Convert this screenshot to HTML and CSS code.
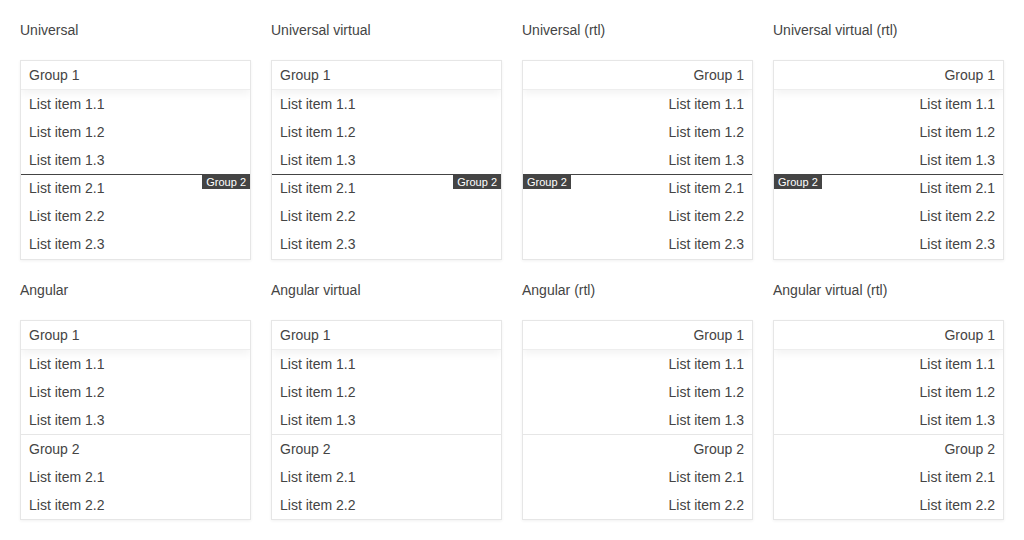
FILE: index.html
```html
<!DOCTYPE html>
<html lang="en">
  <head>
    <meta charset="UTF-8" />
    <meta name="viewport" content="width=device-width, initial-scale=1.0" />
    <title>Grouped lists</title>
    <link rel="stylesheet" href="styles.css">
  </head>
  <body>
    <div class="demo-grid">
      <!-- universal row -->
      <section class="demo">
        <h3 class="demo-title">Universal</h3>
        <div class="list">
          <div class="list-header">Group 1</div>
          <div class="list-item">List item 1.1</div>
          <div class="list-item">List item 1.2</div>
          <div class="list-item">List item 1.3</div>
          <div class="list-item group-start">List item 2.1<span class="group-badge">Group 2</span></div>
          <div class="list-item">List item 2.2</div>
          <div class="list-item">List item 2.3</div>
        </div>
      </section>

      <section class="demo">
        <h3 class="demo-title">Universal virtual</h3>
        <div class="list">
          <div class="list-header">Group 1</div>
          <div class="list-item">List item 1.1</div>
          <div class="list-item">List item 1.2</div>
          <div class="list-item">List item 1.3</div>
          <div class="list-item group-start">List item 2.1<span class="group-badge">Group 2</span></div>
          <div class="list-item">List item 2.2</div>
          <div class="list-item">List item 2.3</div>
        </div>
      </section>

      <section class="demo">
        <h3 class="demo-title">Universal (rtl)</h3>
        <div class="list" dir="rtl">
          <div class="list-header">Group 1</div>
          <div class="list-item">List item 1.1</div>
          <div class="list-item">List item 1.2</div>
          <div class="list-item">List item 1.3</div>
          <div class="list-item group-start">List item 2.1<span class="group-badge">Group 2</span></div>
          <div class="list-item">List item 2.2</div>
          <div class="list-item">List item 2.3</div>
        </div>
      </section>

      <section class="demo">
        <h3 class="demo-title">Universal virtual (rtl)</h3>
        <div class="list" dir="rtl">
          <div class="list-header">Group 1</div>
          <div class="list-item">List item 1.1</div>
          <div class="list-item">List item 1.2</div>
          <div class="list-item">List item 1.3</div>
          <div class="list-item group-start">List item 2.1<span class="group-badge">Group 2</span></div>
          <div class="list-item">List item 2.2</div>
          <div class="list-item">List item 2.3</div>
        </div>
      </section>

      <!-- angular row -->
      <section class="demo">
        <h3 class="demo-title">Angular</h3>
        <div class="list">
          <div class="list-header">Group 1</div>
          <div class="list-item">List item 1.1</div>
          <div class="list-item">List item 1.2</div>
          <div class="list-item">List item 1.3</div>
          <div class="list-item group-row">Group 2</div>
          <div class="list-item">List item 2.1</div>
          <div class="list-item">List item 2.2</div>
        </div>
      </section>

      <section class="demo">
        <h3 class="demo-title">Angular virtual</h3>
        <div class="list">
          <div class="list-header">Group 1</div>
          <div class="list-item">List item 1.1</div>
          <div class="list-item">List item 1.2</div>
          <div class="list-item">List item 1.3</div>
          <div class="list-item group-row">Group 2</div>
          <div class="list-item">List item 2.1</div>
          <div class="list-item">List item 2.2</div>
        </div>
      </section>

      <section class="demo">
        <h3 class="demo-title">Angular (rtl)</h3>
        <div class="list" dir="rtl">
          <div class="list-header">Group 1</div>
          <div class="list-item">List item 1.1</div>
          <div class="list-item">List item 1.2</div>
          <div class="list-item">List item 1.3</div>
          <div class="list-item group-row">Group 2</div>
          <div class="list-item">List item 2.1</div>
          <div class="list-item">List item 2.2</div>
        </div>
      </section>

      <section class="demo">
        <h3 class="demo-title">Angular virtual (rtl)</h3>
        <div class="list" dir="rtl">
          <div class="list-header">Group 1</div>
          <div class="list-item">List item 1.1</div>
          <div class="list-item">List item 1.2</div>
          <div class="list-item">List item 1.3</div>
          <div class="list-item group-row">Group 2</div>
          <div class="list-item">List item 2.1</div>
          <div class="list-item">List item 2.2</div>
        </div>
      </section>
    </div>
  </body>
</html>
```

FILE: styles.css
```css
body {
  margin: 0;
  padding: 20px;
  font-family: "Liberation Sans", Arial, sans-serif;
  font-size: 14px;
  color: #444;
  background: #fff;
}
.demo-grid {
  display: grid;
  grid-template-columns: repeat(4, 231px);
  column-gap: 20px;
  row-gap: 20px;
}
.demo-title {
  margin: 0 0 20px;
  font-size: 14px;
  font-weight: normal;
  line-height: 20px;
  color: #444;
}
.list {
  height: 200px;
  box-sizing: border-box;
  overflow: hidden;
  border: 1px solid #e6e6e6;
  background: #fff;
  box-shadow: 0 1px 3px rgba(0, 0, 0, 0.06);
}
.list-header {
  position: relative;
  z-index: 1;
  height: 28px;
  line-height: 28px;
  padding: 0 8px;
  border-bottom: 1px solid #eee;
  background: #fff;
  box-shadow: 0 4px 8px rgba(0, 0, 0, 0.05);
}
.list-item {
  height: 28px;
  line-height: 28px;
  padding: 0 8px;
}
.group-start {
  position: relative;
  box-sizing: border-box;
  line-height: 27px;
  border-top: 1px solid #444;
}
.group-row {
  border-top: 1px solid #e6e6e6;
}
.group-badge {
  position: absolute;
  top: 0;
  inset-inline-end: 0;
  height: 14px;
  line-height: 14px;
  padding: 0 4px;
  font-size: 11px;
  color: #fff;
  background: #444;
}
```
